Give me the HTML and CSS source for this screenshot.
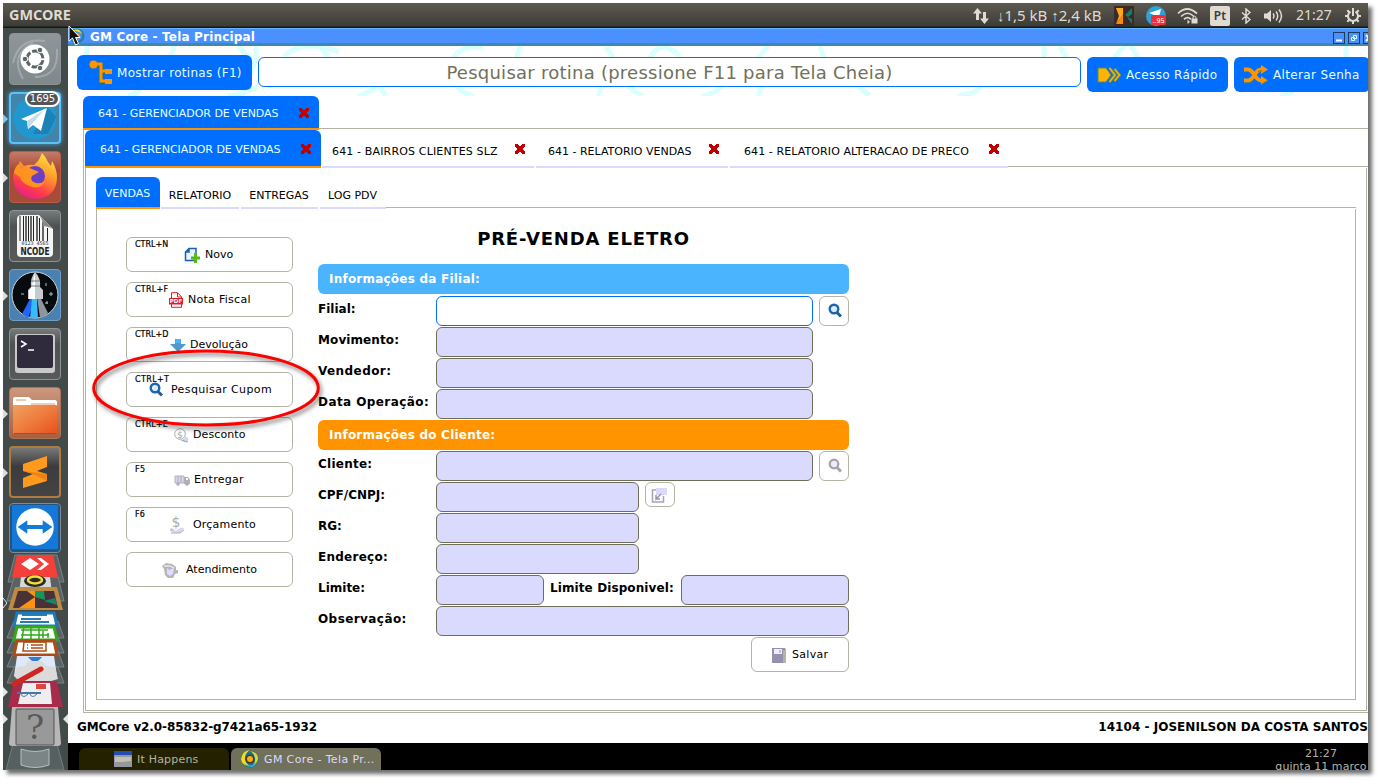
FILE: index.html
```html
<!DOCTYPE html>
<html lang="pt-BR">
<head>
<meta charset="utf-8">
<title>GM Core - Tela Principal</title>
<link rel="stylesheet" href="styles.css">
</head>
<body>
<div class="desktop">
  <header class="topbar">
    <span class="topbar-title">GMCORE</span>
    <div class="tray">
      <svg class="t-net" width="18" height="18" viewBox="0 0 18 18" fill="#dfdbd2"><path d="M5.500 1 1 6.500h3V13h3V6.500h3zM12.500 17 17 11.500h-3V5h-3v6.500H8z"/></svg>
      <span class="t-rate">↓1,5 kB ↑2,4 kB</span>
      <svg class="t-k" width="20" height="20" viewBox="0 0 20 20"><path fill="#3c2a28" d="M0 0h20v20H0z"/><path fill="#ff8a00" d="M2 18l7-9v9z"/><path fill="#ffb300" d="M2 2h7v7z"/><path fill="#ffa51f" d="M2 2h5l2 7-4 5-3 4 3-8z"/><path fill="#0c8068" d="M11 9l7-7v6l-4 3zM13 11l5 2v5z"/></svg>
      <svg class="t-tg" width="22" height="22" viewBox="0 0 22 22"><circle cx="11" cy="11" r="10" fill="#2da1d8"/><path fill="#fff" d="M4 8l12-4-2 8z"/><rect x="6" y="10" width="15" height="10" rx="2" fill="#ee3030"/><text x="13.500" y="17.800" class="tiny">..95</text></svg>
      <svg class="t-wifi" width="22" height="18" viewBox="0 0 22 18" fill="none" stroke="#dfdbd2" stroke-width="1.700"><path d="M1 6.500Q10 -2.500 20 6.500M4 9.500q6.500-6.500 13 0M7 12.300q3.500-3.500 7 0"/><path d="M10.500 12.500l2.500 2.500-2.500 2z" fill="#dfdbd2" stroke="none"/><rect x="14.500" y="11.500" width="6" height="5" fill="#dfdbd2" stroke="none"/><path d="M16 12v-2q1.500-1.500 3 0v2" stroke-width="1"/></svg>
      <span class="t-pt">Pt</span>
      <svg class="t-bt" width="10" height="16" viewBox="0 0 10 16" fill="none" stroke="#dfdbd2" stroke-width="1.500"><path d="M1 4.500l8 7-4 3.500V1l4 3.500-8 7"/></svg>
      <svg class="t-vol" width="21" height="16" viewBox="0 0 21 16" fill="none" stroke="#dfdbd2" stroke-width="1.500"><path d="M1 5.500h3L8 2v12L4 10.500H1z" fill="#dfdbd2" stroke="none"/><path d="M10 5.500q2 2.500 0 5M13 3.500q3.500 4.500 0 9M16 1.500q5 6.500 0 13"/></svg>
      <span class="t-time">21:27</span>
      <svg class="t-gear" width="18" height="18" viewBox="0 0 18 18" fill="none" stroke="#dfdbd2"><path stroke-width="2" d="M6.500 4.700a5 5 0 1 0 5 0"/><path stroke-width="2" d="M9 1v8M1 9h3M14 9h3M3.300 3.300l2 2M14.700 3.300l-2 2M3.300 14.700l2-2M14.700 14.700l-2-2M9 14v3"/></svg>
    </div>
  </header>

  <div class="below">
    <nav class="launcher">
      <div class="tile ubuntu"><svg viewBox="0 0 52 52"><path d="M4 30Q10 4 36 8M14 46Q0 22 24 10M48 16Q50 44 26 44" fill="none" stroke="#b4bbbe" stroke-width="2" opacity=".6"/><circle cx="26" cy="26" r="14.500" fill="#fff"/><circle cx="26" cy="26" r="8" fill="none" stroke="#5c666a" stroke-width="3" stroke-dasharray="14.700 2" transform="rotate(8 26 26)"/><g fill="#5c666a" stroke="#fff"><circle cx="16" cy="26" r="2.800"/><circle cx="31" cy="17" r="2.800"/><circle cx="31" cy="35" r="2.800"/></g></svg></div>
      <div class="tile telegram"><i class="pip blue"></i><svg viewBox="0 0 52 52"><circle cx="26" cy="26" r="21.500" fill="#2197cf"/><path d="M38 15l9 10-8 17-15 0z" fill="#1a82b6"/><path d="M12 27l26-11-6 23-8-6-5 4-1-8z" fill="#fff"/><path d="M18 29l17-11-12 14-4 5z" fill="#c3dbea"/></svg><span class="count">1695</span></div>
      <div class="tile firefox"><i class="pip"></i><svg viewBox="0 0 52 52"><defs><linearGradient id="ff" x1=".8" y1="0" x2=".3" y2="1"><stop offset="0" stop-color="#ffe843"/><stop offset=".4" stop-color="#ff9a2a"/><stop offset=".75" stop-color="#ff3a4d"/><stop offset="1" stop-color="#e3208c"/></linearGradient></defs><path d="M33 2q4 4 6 9l3 4 1-5q5 8 5 17-1 20-22 21Q5 46 4 27q0-7 5-12l2-5 4 5q5-2 10-1l4-4q2-3 4-8z" fill="url(#ff)"/><circle cx="26" cy="25" r="10" fill="#6b3fc4"/><path d="M5 22q1-7 5-9l2 4q6-2 11 1l7 3-7 4q-3 5 4 7 5 1 9-2-4 8-13 6-11-4-12-10z" fill="#ff9320"/></svg></div>
      <div class="tile dark"><svg viewBox="0 0 52 52"><path d="M8 9q0-4 5-4h17l14 14v24q0 4-4 4H12q-4 0-4-4z" fill="#f5f5f5"/><path stroke="#222" d="M11 6v25M14.500 6v25M19.500 6v25M24.500 6v25M30.500 8v23M38.500 18v13"/><path stroke="#666" stroke-width="2" d="M17 6v25M22 6v25M28 6v25M34 12v19"/><path d="M29 4l15 15q-8-4-10-2 0-9-5-13z" fill="#888"/><text x="26" y="35" class="digits">0123 4565</text><text x="26" y="45" class="ncode" textLength="29" lengthAdjust="spacingAndGlyphs">NCODE</text></svg></div>
      <div class="tile rocket"><i class="pip"></i><svg viewBox="0 0 52 52"><circle cx="26" cy="26" r="23" fill="#080b0d" stroke="#c5d7e4"/><path d="M22 28l-9 17 6 4 7-18z" fill="#2166ff"/><path d="M23 30l-2 19h8l-1-19z" fill="#35bcff"/><path d="M28 28l3 21q6-2 8-5l-8-16z" fill="#8e9699"/><path d="M26 3q6 6 5 15l3 3v9H19v-9l3-3Q21 9 26 3z" fill="#c7cbcd"/><path d="M26 4v26h-6v-8l3-5z" fill="#fff"/><path d="M22 12h8M22 17h9" stroke="#777"/><path d="M42 23v4M40 25h4M37 14v3M12 25h3M36 34h3M38 32v3" stroke="#a9c1c9"/></svg></div>
      <div class="tile dark"><svg viewBox="0 0 52 52"><rect x="6" y="6" width="40" height="39" rx="3" fill="#c9c9cb"/><rect x="8" y="7" width="36" height="33" rx="2" fill="#302a3d"/><path d="M12 13l5 3-5 3M19 22h6" fill="none" stroke="#fff" stroke-width="1.500"/></svg></div>
      <div class="tile files"><i class="pip"></i><svg viewBox="0 0 52 52"><defs><linearGradient id="fo" x1="0" y1="0" x2="1" y2="1"><stop offset="0" stop-color="#f0a060"/><stop offset=".5" stop-color="#ee7c3d"/><stop offset="1" stop-color="#e9501c"/></linearGradient></defs><path d="M4 12q0-2 2-2h14l3 3h23q2 0 2 3v6H4z" fill="#fff"/><path d="M7 13h10M22 17h24" stroke="#e4956e"/><rect x="4" y="18" width="44" height="29" rx="1" fill="url(#fo)"/><path d="M5 46.500h42" stroke="#d43c0d"/></svg></div>
      <div class="tile sublime"><i class="pip"></i><svg viewBox="0 0 52 52"><path d="M14 18l24-8v11l-10 4 10 3v7l-24 7V32l10-4-10-3z" fill="#ff9a1e"/><path d="M14 25l24 3v7l-14-7z" fill="#ec8412"/></svg></div>
      <div class="tile viewer"><svg viewBox="0 0 52 52"><rect x="2" y="2" width="48" height="46" rx="1" fill="#1478da"/><circle cx="26" cy="25" r="19.500" fill="#fff"/><path d="M8 25l10-7v5h16v-5l10 7-10 7v-5H18v5z" fill="#127ad8"/></svg></div>
      <svg class="stack" width="65" height="217" viewBox="0 0 65 217">
        <g fill="#5a6263" stroke="#7b8485"><path d="M12 2h42l7 27H5z"/><path d="M11 24h44l6 24H4z"/><path d="M11 68h44l6 17H4zM11 84h44l6 16H4zM11 98h44l6 16H4zM11 114h44l6 16H4z"/></g>
        <path d="M14 2h36l5 22H9z" fill="#f53f3a"/><path d="M18 11l9-6 9 6-9 6z" fill="#fff"/><path d="M34 5l4 0 8 6-8 6h-4l7-6z" fill="#fff"/>
        <path d="M18 24h29l2 16H16z" fill="#d7d7d7"/><ellipse cx="32" cy="28" rx="11" ry="6" fill="#292929"/><ellipse cx="32" cy="27" rx="7" ry="3.500" fill="none" stroke="#eee135" stroke-width="2.500"/>
        <path d="M12 34h42l6 23H5z" fill="#bc8a43"/><path d="M15 38h36l4 17H10z" fill="#493237"/><path d="M24 38l8 6-16 11h16V38z" fill="#ff9110"/><path d="M32 38v6l10 3-1-9z" fill="#16945d"/><path d="M41 48l11-3 2 7z" fill="#16856d"/>
        <path d="M14 60h37l3 13H11z" fill="#fff" stroke="#1d79b9" stroke-width="3"/><path d="M19 62h25M18 66h20M17 69h29" stroke="#277db3" stroke-width="2"/>
        <path d="M14 74h37l3 13H11z" fill="#fff" stroke="#31a91b" stroke-width="3"/><path d="M21 73l-2 13M28 73v13M36 73v13M18 77h27M18 82h28M40 85v-7M45 85v-5" stroke="#31a91b" stroke-width="1.500"/>
        <path d="M14 88h37l3 14H11z" fill="#fff" stroke="#ae4c18" stroke-width="3"/><path d="M21 89h22v9H20zM24 92h1M28 92h12M24 95h1M28 95h12" fill="none" stroke="#ae4c18" stroke-width="1.500"/>
        <path d="M14 103h37l3 20H11z" fill="#dfe8f8"/><path d="M25 104q7 9 14 0z" fill="#337bd8"/>
        <path d="M14 114l8-1 3-5h14l4 5 9 1 3 12-10 3H17l-6-6z" fill="#dbdbdb"/>
        <path d="M11 128h43l6 26H5z" fill="#a82b4c"/><path d="M20 130h27l2 21H15z" fill="#eee"/><path d="M11 131L38 116" stroke="#cf2720" stroke-width="5" stroke-linecap="round"/><path d="M33 131h10v5H33z" fill="#e04442"/><path d="M14 140h24" stroke="#4a75a9" stroke-width="2"/><path d="M18 141q2 5 7 0M27 141q2 5 7 0" fill="none" stroke="#4a75a9"/>
        <path d="M11 187h42l8 30H3z" fill="#566061" stroke="#737d7e"/><path d="M18 196q14 5 28 0v16q-14 5-28 0z" fill="#7c8586" stroke="#b7bebe"/>
        <path d="M9 154h46l3 36q0 3-3 3H9q-3 0-3-3z" fill="#b7b7b7"/><rect x="13" y="156" width="38" height="36" rx="1" fill="#999" stroke="#535353"/><text x="32" y="186" class="question">?</text>
        <path d="M0 134l5 5-5 5zM0 161l5 5-5 5zM65 161l-5 5 5 5z" fill="#e4e4e4"/><path d="M0 45l4 5-4 5" fill="none" stroke="#e4e4e4"/>
      </svg>
    </nav>

    <main class="window">
      <div class="titlebar"><svg class="app-icon" width="16" height="16" viewBox="0 0 18 18"><circle cx="9" cy="9" r="7" fill="none" stroke="#29819b" stroke-width="3"/><path d="M4 3q8-4 11 4-4-4-11-4z" fill="#eee216"/><circle cx="9" cy="9" r="3" fill="#f5a111"/></svg><span class="titletext">GM Core - Tela Principal</span><div class="winbtns"><i><svg viewBox="0 0 12 12"><path d="M3 8.500h6" stroke="#fff" stroke-width="2"/></svg></i><i><svg viewBox="0 0 12 12"><path d="M5.500 3.500h3v3h-3zM3.500 5.500h3v3h-3z" fill="none" stroke="#d9ffff"/></svg></i><i><svg viewBox="0 0 12 12"><path d="M3 3l6 6M9 3L3 9" stroke="#fff" stroke-width="2"/></svg></i></div></div>

      <div class="toolbar">
        <svg class="swash" width="1300" height="50" viewBox="0 0 1300 50" fill="none" stroke="#d9ffff" stroke-width="5"><path d="M20 0q-6 20 5 36M106 0q-1 8-9 17M170 0l13 14M188 0q2 20-16 44M60 50q10-2 14-10M160 50q20-3 30-10M216 10q20-18 55-4M252 0l10 14M290 50q16-5 20-12M310 38l8 12M385 12q10-14 30-10M388 40q8 8 18 10M452 0l-4 14M530 50l6-14M538 0l7 12M560 40l14 10M582 12q10-20 30-2M634 50q18-4 20-12M690 50l5-12M700 0l-10 12M752 0l4 12M790 40l12 10M890 50q20-2 24-12M976 0v12M992 0l6 12M1046 12l12-14M1062 -2l8 14M1212 50q14-2 18-12M1278 0v12"/></svg>
        <button class="btn b-rot"><svg width="24" height="26" viewBox="0 0 24 26"><path d="M5 5h7v17h7M12 12h7" fill="none" stroke="#26785f" stroke-width="4.500"/><path d="M5 4h7v17h7M12 11h7" fill="none" stroke="#ff9300" stroke-width="3"/><circle cx="4.500" cy="4.500" r="4" fill="#ff9300"/><path d="M16 9h7v5h-7zM16 19h7v5h-7z" fill="#ff9300"/></svg><span>Mostrar rotinas (F1)</span></button>
        <div class="search"><span>Pesquisar rotina (pressione F11 para Tela Cheia)</span></div>
        <button class="btn b-ace"><svg width="25" height="18" viewBox="0 0 25 18"><path d="M1 2h8l5 7-5 7H1z" fill="#ffb300" stroke="#5f8b46"/><path d="M12.500 2L18 9l-5.500 7M17.500 3L22.500 9l-5 6" fill="none" stroke="#5f8b46" stroke-width="3"/><path d="M12.500 2L18 9l-5.500 7M17.500 3L22.500 9l-5 6" fill="none" stroke="#ffb300" stroke-width="1.500"/></svg><span>Acesso Rápido</span></button>
        <button class="btn b-alt"><svg width="26" height="20" viewBox="0 0 26 20"><path d="M1 4.500h4c6 0 7 11 13 11h3M1 15.500h4c6 0 7-11 13-11h3" fill="none" stroke="#ff9300" stroke-width="4"/><path d="M18 0l7 4.500-7 4.500zM18 11l7 4.500-7 4.500z" fill="#ff9300"/><path d="M1 18h5q3 0 5-4M15 7q2-2 4-1M18 19.500l7-4" fill="none" stroke="#5d7e4c"/></svg><span>Alterar Senha</span></button>
      </div>

      <div class="tabs l1">
        <div class="tab on"><span>641 - GERENCIADOR DE VENDAS</span><b class="x"></b></div>
        <div class="rest"></div>
      </div>
      <section class="pane p1">
        <div class="tabs l2">
          <div class="tab on"><span>641 - GERENCIADOR DE VENDAS</span><b class="x"></b></div>
          <div class="tab t-slz"><span>641 - BAIRROS CLIENTES SLZ</span><b class="x"></b></div>
          <div class="tab t-ven"><span>641 - RELATORIO VENDAS</span><b class="x"></b></div>
          <div class="tab t-pre"><span>641 - RELATORIO ALTERACAO DE PRECO</span><b class="x"></b></div>
          <div class="rest"></div>
        </div>
        <section class="pane p2">
          <div class="tabs l3">
            <div class="tab on"><span>VENDAS</span></div>
            <div class="tab t-rel"><span>RELATORIO</span></div>
            <div class="tab t-ent"><span>ENTREGAS</span></div>
            <div class="tab t-log"><span>LOG PDV</span></div>
            <div class="rest"></div>
          </div>
          <section class="pane p3">
            <div class="actions">
              <button class="act a1"><kbd>CTRL+N</kbd><svg viewBox="0 0 16 16"><path d="M5 1.500h7v12H1.500V5zM5 1v4H1" fill="#eaf4ff" stroke="#1b5fb0" stroke-width="1.500"/><path d="M11.500 6v10M7 11h9" stroke="#55b81c" stroke-width="3"/></svg><span>Novo</span></button>
              <button class="act a2"><kbd>CTRL+F</kbd><svg viewBox="0 0 16 16"><path d="M3.500.7h6l4 4v10.600h-10z" fill="#fff" stroke="#e51c23"/><path d="M9.500 1v4h4" fill="none" stroke="#e51c23"/><path d="M1 6h14v6.500H1z" fill="#e51c23"/><text x="8" y="11.300" class="pdf">PDF</text></svg><span>Nota Fiscal</span></button>
              <button class="act a3"><kbd>CTRL+D</kbd><svg viewBox="0 0 16 16"><path d="M5 2h6v5h5l-8 8-8-8h5z" fill="#4a9cc9"/><path d="M5.500 2h5v4h-5z" fill="#50b4ff"/></svg><span>Devolução</span></button>
              <button class="act a4"><kbd>CTRL+T</kbd><svg viewBox="0 0 16 16"><circle cx="7" cy="6" r="4.300" fill="#d9ecfa" stroke="#1d66ae" stroke-width="2.400"/><path d="M10 9.500l4 4" stroke="#245f8f" stroke-width="3"/><path d="M5 7V5l2-1" stroke="#fff" fill="none"/></svg><span>Pesquisar Cupom</span></button>
              <button class="act a5"><kbd>CTRL+E</kbd><svg viewBox="0 0 16 16"><circle cx="7" cy="7" r="5.300" fill="#fff" stroke="#b2b2aa"/><text x="7" y="10.500" class="money">$</text><circle cx="12.500" cy="12.500" r="2.800" fill="#d5d5f6"/><path d="M8 13l3 1 4 1" stroke="#aaa"/></svg><span>Desconto</span></button>
              <button class="act a6"><kbd>F5</kbd><svg viewBox="0 0 16 16"><path d="M1 4h9v7H1z" fill="#d5d5f6" stroke="#b6b6ba"/><path d="M4 4v7M7 4v7" stroke="#aaa"/><path d="M10 5h4l2 3v4h-6z" fill="#b2b2ac"/><path d="M12 6h2v2h-2z" fill="#fff"/><circle cx="4" cy="12" r="1.800" fill="#b1b1bd"/><circle cx="13" cy="12" r="1.800" fill="#aaaab9"/></svg><span>Entregar</span></button>
              <button class="act a7"><kbd>F6</kbd><svg class="hand" viewBox="0 0 16 20"><text x="7" y="12" class="dollar">$</text><path d="M1 13q4 0 6 3 4-4 8-3-2 5-5 5H5q-3 0-4-5z" fill="#d5d5f6"/><path d="M1 15h3M2 18h9l4-3" stroke="#b9aea5" fill="none"/></svg><span>Orçamento</span></button>
              <button class="act a8"><svg viewBox="0 0 16 16"><path d="M0 4l4-3 6 1 4 3v3h2v3l-3 1-2 4H6l-3-3-1-6z" fill="#b5b5b7"/><path d="M5 6l2 2 5-2-1 6-3 2-3-2z" fill="#dcdcff"/><path d="M2 4l6 0 4 2" stroke="#fff" fill="none"/></svg><span>Atendimento</span></button>
            </div>
            <form class="form">
              <h1>PRÉ-VENDA ELETRO</h1>
              <div class="band sky"><span>Informações da Filial:</span></div>
              <div class="row"><label>Filial:</label><i class="in w377 live"></i><i class="lens"><svg viewBox="0 0 16 16"><circle cx="7" cy="6" r="4.300" fill="#d9ecfa" stroke="#1d66ae" stroke-width="2.400"/><path d="M10 9.500l4 4" stroke="#245f8f" stroke-width="3"/></svg></i></div>
              <div class="row"><label class="ls1">Movimento:</label><i class="in w377"></i></div>
              <div class="row"><label class="ls4">Vendedor:</label><i class="in w377"></i></div>
              <div class="row"><label class="ls4">Data Operação:</label><i class="in w377"></i></div>
              <div class="band orange"><span>Informações do Cliente:</span></div>
              <div class="row"><label class="ls2">Cliente:</label><i class="in w377"></i><i class="lens"><svg viewBox="0 0 16 16"><circle cx="7" cy="6" r="4.300" fill="#ececff" stroke="#a8a2a6" stroke-width="2.200"/><path d="M10 9.500l4 4" stroke="#aaa2ac" stroke-width="3"/></svg></i></div>
              <div class="row"><label>CPF/CNPJ:</label><i class="in w203"></i><i class="lens short"><svg viewBox="0 0 16 16"><path d="M6 3H1.500v12h11V9" fill="none" stroke="#a7a2bc" stroke-width="1.500"/><rect x="5" y="1" width="11" height="7" fill="#dadaff"/><path d="M10 7l-5 5V8M5 12h4" fill="none" stroke="#9995aa" stroke-width="1.500"/></svg></i></div>
              <div class="row"><label>RG:</label><i class="in w203"></i></div>
              <div class="row"><label class="ls2">Endereço:</label><i class="in w203"></i></div>
              <div class="row"><label>Limite:</label><i class="in w108"></i><label class="disp ls1">Limite Disponivel:</label><i class="in w168"></i></div>
              <div class="row"><label class="ls4">Observação:</label><i class="in w413"></i></div>
              <button type="button" class="save"><svg viewBox="0 0 16 16"><path d="M1 1h13l1 2v13H1z" fill="#9391ab"/><path d="M12 3h3v13h-3z" fill="#b5b2a8"/><path d="M3 2h8v5H3z" fill="#eeeeff"/><path d="M9 3v3" stroke="#9391ab"/></svg><span>Salvar</span></button>
            </form>
          </section>
        </section>
      </section>

      <footer class="status"><span class="ver">GMCore v2.0-85832-g7421a65-1932</span><span class="user">14104 - JOSENILSON DA COSTA SANTOS</span></footer>
      <div class="taskbar">
        <div class="task idle"><svg width="18" height="16" viewBox="0 0 18 16"><path d="M0 0h18v16H0z" fill="#96989f"/><path d="M0 0h18v4H0z" fill="#234db0"/><path d="M1 6h16v4l-8 1H1z" fill="#c3c1ae"/></svg><span>It Happens</span></div>
        <div class="task now"><svg width="18" height="18" viewBox="0 0 18 18"><circle cx="9" cy="9" r="8.500" fill="#1d6fa0"/><path d="M9 0q-6 4-5 10 1 4 5 6-8 0-9-7Q1 1 9 0z" fill="#eee216"/><path d="M9 1q8 1 8 8-1 6-7 8 5-4 4-9-1-5-5-7z" fill="#d8dc2c"/><path d="M3 13q7 6 13-2-3 8-10 5z" fill="#29b5c8"/><circle cx="9" cy="9" r="4.500" fill="#4d3a25"/><circle cx="9" cy="9" r="3" fill="#ffac14"/></svg><span>GM Core - Tela Pr...</span></div>
        <div class="clock"><span class="hour">21:27</span><span class="day">quinta 11 março</span></div>
      </div>
    </main>
  </div>
</div>
<svg class="ring" width="236" height="86" viewBox="0 0 236 86"><ellipse cx="116" cy="41" rx="112.300" ry="37" fill="none" stroke="#f00" stroke-width="3"/></svg>
<svg class="cursor" width="14" height="21" viewBox="0 0 14 21"><path d="M1 1v15l3.500-3 3 7 3-1.500-3-6H12z" fill="#111" stroke="#fff"/></svg>
</body>
</html>
```
FILE: styles.css
```css
* { box-sizing: border-box; }
body { margin: 0; width: 1379px; height: 781px; background: #fff; overflow: hidden; font-family: "DejaVu Sans", sans-serif; }
button { font-family: inherit; padding: 0; margin: 0; }
span, label, kbd, h1 { white-space: nowrap; }
svg { display: block; flex: none; }
.desktop { width: 1365px; height: 767px; margin: 3px; overflow: hidden; box-shadow: 4px 4px 4px #6f6f6f; display: flex; flex-direction: column; }

/* top panel */
.topbar { height: 25px; background: linear-gradient(#5d5a50, #3d3c37 92%, #101a10 96%); display: flex; align-items: center; padding: 0 6px; color: #dfdbd2; font-family: "Noto Sans", sans-serif; flex: none; }
.topbar-title { font-size: 14.400px; font-weight: 700; line-height: 20px; margin-top: -2px; }
.tray { margin-left: auto; display: flex; align-items: center; font-size: 14px; }
.t-rate { margin: 0 11px 0 7px; width: 106px; font-size: 15px; line-height: 20px; margin-top: -2px; }
.t-tg { margin-left: 11px; }
.t-wifi { margin-left: 10px; }
.t-pt { margin-left: 11px; width: 20px; height: 20px; border-radius: 2px; background: #dfdbd2; color: #3c3b37; font-size: 12px; font-weight: 600; line-height: 19px; text-align: center; }
.t-bt { margin-left: 11px; }
.t-vol { margin-left: 12px; }
.t-time { margin: -2px 12px 0 12px; width: 36px; line-height: 20px; }
.tiny { font: 6.500px "DejaVu Sans"; fill: #fff; text-anchor: middle; }
.below { flex: 1; display: flex; min-height: 0; }

/* launcher */
.launcher { width: 65px; flex: none; background: #434a4a; display: flex; flex-direction: column; align-items: center; gap: 7px; padding-top: 5px; }
.tile { width: 52px; height: 52px; border-radius: 4px; border: 1px solid #8d9394; position: relative; flex: none; margin-right: 1px; }
.tile > svg { width: 52px; height: 52px; margin: -1px; }
.ubuntu { background: linear-gradient(#8e9699, #7f898c); }
.telegram { background: #4384aa; border: 2px solid #5cc1f5; box-shadow: 0 0 5px #3cacee; }
.telegram > svg { margin: -2px; }
.firefox { background: linear-gradient(#c47a68, #a84b38 35%); border-color: #bd5a45; }
.dark { background: linear-gradient(#777a7a, #4f5252 30%, #585a5a); }
.rocket { background: #4b81b0; border-color: #6f9fc8; }
.files { background: linear-gradient(#cc987e, #a85f3e); border-color: #ad7352; }
.sublime { background: linear-gradient(#777, #3c3c3e 38%, #444); border: 2px solid #ae7b40; }
.sublime > svg { margin: -2px; }
.viewer { height: 50px; margin-top: -2px; background: #24527d; border-color: #7a8b99; }
.viewer > svg { height: 50px; }
.stack { margin-top: -7px; }
.count { position: absolute; left: 14px; top: -3px; width: 35px; height: 16px; border: 2px solid #fff; border-radius: 8px; background: #555; color: #fff; font: 10px/12px "DejaVu Sans"; text-align: center; }
.pip { position: absolute; left: -7px; top: 21px; border: 5px solid transparent; border-left-color: #dcdcdc; border-right: 0; }
.telegram .pip { left: -8px; top: 20px; }
.sublime .pip { left: -8px; top: 20px; }
.pip.blue { border-left-color: #7cc8ec; }
.digits { font: 5px "DejaVu Sans Mono"; text-anchor: middle; fill: #333; }
.ncode { font: 700 11px "DejaVu Sans"; text-anchor: middle; fill: #222; }
.question { font: 34px "DejaVu Serif"; text-anchor: middle; fill: #5a5a5a; }

/* application window */
.window { flex: 1; min-width: 0; background: #fff; display: flex; flex-direction: column; }
.titlebar { height: 18px; background: #4a90ff; border-top: 1px solid #64b4ff; border-bottom: 3px solid #3f8aa8; display: flex; align-items: center; color: #fff; font-size: 12px; font-weight: 700; flex: none; }
.titletext { margin-left: 5px; line-height: 14px; padding-top: 2px; letter-spacing: .17px; }
.app-icon { margin-left: 1px; }
.winbtns { margin-left: auto; display: flex; gap: 3px; margin-right: -7px; padding-top: 3px; }
.winbtns i { width: 12px; height: 12px; border: 1px solid #1c3c5c; }
.winbtns svg { width: 12px; height: 12px; margin: -1px; }
.toolbar { height: 50px; position: relative; display: flex; gap: 6px; padding: 11px 0 0 9px; flex: none; }
.swash { position: absolute; left: 0; top: 0; }
.btn { height: 35px; border: 0; border-radius: 6px; background: #006eff; color: #e6ffff; font-size: 12px; letter-spacing: .35px; display: flex; align-items: center; position: relative; flex: none; }
.b-rot { width: 175px; margin-top: -2px; padding-left: 12px; letter-spacing: .31px; }
.b-rot span { margin-left: 4px; }
.b-ace { width: 141px; padding-left: 10px; }
.b-ace span { margin-left: 4px; }
.b-alt { width: 136px; padding-left: 9px; }
.b-alt span { margin-left: 4px; }
.search { width: 823px; height: 30px; border: 1px solid #006eff; border-radius: 6px; background: #fff; position: relative; text-align: center; font-size: 18px; letter-spacing: .25px; line-height: 29px; color: #72705a; flex: none; }

/* tabs */
.tabs { display: flex; flex: none; }
.tab { display: flex; align-items: center; border-bottom: 2px solid #dadaff; font-size: 11px; color: #000; margin-left: 2px; flex: none; }
.tab span { padding-top: 2px; }
.tab.on { margin-left: 0; background: #006eff; color: #e6ffff; border-bottom-color: #ff9300; border-radius: 6px 6px 0 0; }
.rest { flex: 1; border-bottom: 1px solid #b4b4a5; margin-bottom: 1px; }
.x { width: 10px; height: 10px; margin-left: auto; margin-top: 2px; background: linear-gradient(45deg, transparent 36%, #c00000 36% 64%, transparent 64%), linear-gradient(-45deg, transparent 36%, #c00000 36% 64%, transparent 64%); }
.l1 { height: 34px; margin-left: 15px; }
.l1 .on, .l2 .on { width: 236px; padding: 0 10px 0 15px; letter-spacing: -.03px; }
.l2 { height: 38px; margin-left: 1px; }
.l2 .tab:not(.on) { padding: 5px 9px 0 10px; margin-left: 2px; }
.l2 .tab:not(.on) .x { margin-top: -3px; }
.l2 .tab.t-slz { width: 212px; margin-left: 1px; letter-spacing: .15px; }
.l2 .tab.t-ven { width: 192px; padding-left: 12px; }
.l2 .tab.t-pre { width: 278px; padding-left: 14px; letter-spacing: .09px; }
.l3 { height: 32px; margin-left: 10px; margin-right: 10px; }
.l3 .tab { justify-content: center; padding: 5px 1px 0 0; }
.l3 .tab.on { width: 64px; padding-top: 0; }
.l3 .tab.t-rel { width: 78px; margin-left: 1px; padding-right: 0; }
.t-ent { width: 77px; }
.t-log { width: 66px; }
.pane { display: flex; flex-direction: column; }
.p1 { flex: none; height: 583px; margin-left: 15px; border-left: 1px solid #b4b4a5; border-bottom: 1px solid #b4b4a5; padding-bottom: 1px; }
.p2 { flex: 1; margin: 0 1px 0 1px; border: 1px solid #b4b4a5; border-top: 0; padding-top: 9px; }
.p3 { height: 491px; margin: 0 10px; border: 1px solid #b4b4a5; border-top: 0; flex-direction: row; }

/* action buttons */
.actions { width: 167px; margin: 28px 0 0 29px; display: flex; flex-direction: column; gap: 10px; flex: none; }
.act { width: 167px; height: 35px; border: 1px solid #b4b4a5; border-radius: 6px; background: #fff; color: #000; font-size: 11px; display: flex; align-items: center; position: relative; }
.act kbd { position: absolute; left: 8px; top: 2px; font: 8px/10px "DejaVu Sans"; -webkit-text-stroke: .2px #000; }
.act svg { width: 16px; height: 16px; }
.act span { margin-left: 4px; }
.act .hand { height: 20px; }
.a1 { padding-left: 57px; }
.act.a1 span { margin-left: 5px; }
.a2 { padding-left: 41px; letter-spacing: .28px; }
.a3 { padding-left: 43px; }
.a4 { padding-left: 21px; letter-spacing: .38px; }
.act.a4 span { margin-left: 7px; }
.a5 { padding-left: 46px; letter-spacing: .1px; }
.a6 { padding-left: 47px; letter-spacing: .3px; }
.a7 { padding-left: 42px; letter-spacing: .2px; }
.act.a7 span { margin-left: 8px; }
.a8 { padding-left: 35px; }
.act.a8 span { margin-left: 8px; }
.pdf { font: 700 5.500px "DejaVu Sans"; fill: #fff; text-anchor: middle; letter-spacing: 0; }
.money { font: 9px "DejaVu Sans"; fill: #a7a79f; text-anchor: middle; }
.dollar { font: 14px "DejaVu Sans"; fill: #aaa; text-anchor: middle; }

/* form */
.form { width: 531px; margin-left: 25px; display: flex; flex-direction: column; gap: 1px; flex: none; }
h1 { margin: 18px 0 12px; font-size: 18px; line-height: 24px; font-weight: 700; text-align: center; letter-spacing: .83px; }
.band { height: 30px; border-radius: 6px; color: #fff; font-size: 12px; font-weight: 700; line-height: 30px; padding-left: 11px; letter-spacing: .22px; }
.sky { background: #4ab4ff; margin-bottom: 1px; }
.orange { background: #ff9300; }
.row { height: 30px; display: flex; }
label { width: 118px; font-size: 12px; font-weight: 700; line-height: 26px; }
.ls1 { letter-spacing: .1px; }
.ls2 { letter-spacing: .25px; }
.ls4 { letter-spacing: .42px; }
.in { height: 30px; border: 1px solid #6e6e5a; border-radius: 6px; background: #dadaff; }
.live { background: #fff; border-color: #006eff; }
.w377 { width: 377px; }
.w203 { width: 203px; }
.w108 { width: 108px; }
.w168 { width: 168px; }
.w413 { width: 413px; }
.disp { width: 131px; margin-left: 6px; }
.lens { width: 30px; height: 30px; margin-left: 6px; border: 1px solid #b4b4a5; border-radius: 6px; display: flex; align-items: center; justify-content: center; }
.lens svg { width: 16px; height: 16px; margin-left: 2px; }
.short { height: 25px; }
.short svg { margin-left: -2px; }
.save { width: 98px; height: 35px; align-self: flex-end; border: 1px solid #b4b4a5; border-radius: 6px; background: #fff; color: #000; font-size: 11px; letter-spacing: .3px; display: flex; align-items: center; padding-left: 19px; }
.save svg { width: 16px; height: 16px; }
.save span { margin-left: 5px; }

.status { height: 30px; display: flex; justify-content: space-between; padding-left: 9px; font-size: 12px; font-weight: 700; line-height: 28px; flex: none; }
.ver { letter-spacing: -.1px; }
.user { letter-spacing: .03px; }
.taskbar { height: 27px; background: #000; display: flex; gap: 2px; padding: 5px 0 0 11px; font-size: 12px; flex: none; }
.task { width: 150px; height: 22px; border-radius: 6px 6px 0 0; display: flex; align-items: center; }
.idle { background: #242100; color: #b4b4a5; padding-left: 35px; letter-spacing: .2px; }
.now { background: #71705a; color: #dadaff; padding-left: 10px; letter-spacing: .37px; }
.task span { margin-left: 5px; font-size: 11px; }
.clock { margin-left: auto; margin-top: -1px; width: 94px; height: 23px; display: flex; flex-direction: column; align-items: center; color: #b4b4a5; font-size: 11px; line-height: 13px; letter-spacing: .05px; }

.ring { position: absolute; left: 90px; top: 347px; filter: drop-shadow(2px 3px 2px rgba(0,0,0,.5)); }
.cursor { position: absolute; left: 68px; top: 25px; }
```
